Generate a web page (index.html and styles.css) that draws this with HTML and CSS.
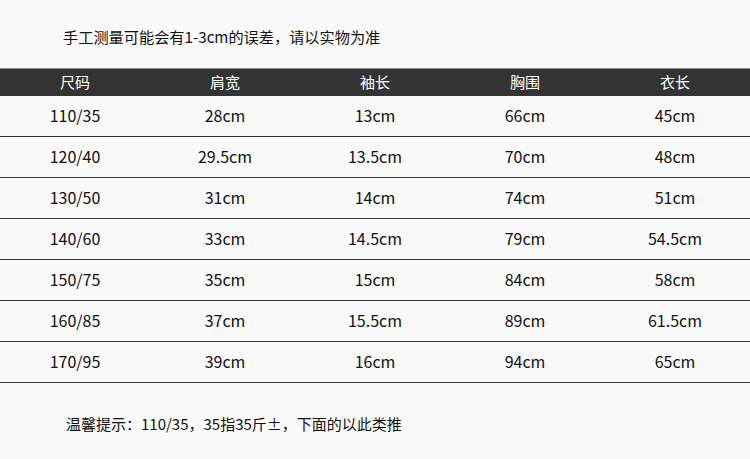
FILE: index.html
```html
<!DOCTYPE html>
<html lang="zh">
<head>
<meta charset="utf-8">
<link rel="stylesheet" href="styles.css">
</head>
<body>
<div class="page">
  <p class="note">手工测量可能会有1-3cm的误差，请以实物为准</p>
  <div class="table">
    <div class="row head"><div>尺码</div><div>肩宽</div><div>袖长</div><div>胸围</div><div>衣长</div></div>
    <div class="row"><div>110/35</div><div>28cm</div><div>13cm</div><div>66cm</div><div>45cm</div></div>
    <div class="row"><div>120/40</div><div>29.5cm</div><div>13.5cm</div><div>70cm</div><div>48cm</div></div>
    <div class="row"><div>130/50</div><div>31cm</div><div>14cm</div><div>74cm</div><div>51cm</div></div>
    <div class="row"><div>140/60</div><div>33cm</div><div>14.5cm</div><div>79cm</div><div>54.5cm</div></div>
    <div class="row"><div>150/75</div><div>35cm</div><div>15cm</div><div>84cm</div><div>58cm</div></div>
    <div class="row"><div>160/85</div><div>37cm</div><div>15.5cm</div><div>89cm</div><div>61.5cm</div></div>
    <div class="row"><div>170/95</div><div>39cm</div><div>16cm</div><div>94cm</div><div>65cm</div></div>
  </div>
  <p class="tip">温馨提示：110/35，35指35斤±，下面的以此类推</p>
</div>
</body>
</html>
```
FILE: styles.css
```css
html, body {
  margin: 0;
  padding: 0;
  background: #f9f9f9;
}
.page {
  width: 750px;
  height: 459px;
  font-family: "Noto Sans CJK SC", "Noto Sans", sans-serif;
  color: #111;
}
.note {
  margin: 0;
  height: 68px;
  box-sizing: border-box;
  padding: 26px 0 0 63px;
  font-size: 15.2px;
  line-height: 20px;
}
.table {
  display: flex;
  flex-direction: column;
}
.row {
  display: grid;
  grid-template-columns: repeat(5, 150px);
  height: 40px;
  border-bottom: 1px solid #333;
  font-size: 16px;
}
.row > div {
  display: flex;
  align-items: center;
  justify-content: center;
  padding-bottom: 2px;
}
.row.head {
  height: 27px;
  border-top: 1px solid #8a8a8a;
  border-bottom: none;
  background: #333;
  color: #fff;
  font-size: 15px;
}
.row.head > div {
  padding-bottom: 3px;
}
.tip {
  margin: 0;
  padding: 31px 0 0 66px;
  font-size: 15px;
  line-height: 20px;
}
```
